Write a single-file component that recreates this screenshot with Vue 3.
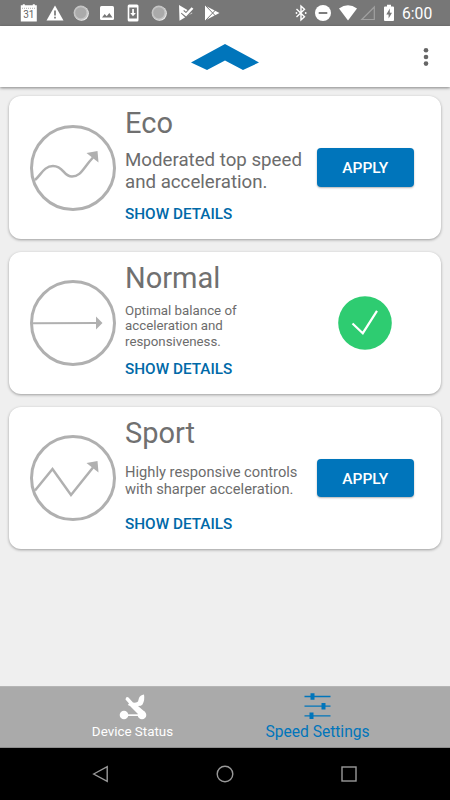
<script setup>
import { ref } from 'vue';

const active = ref('normal');
const tab = ref('speed');

const modes = [
  {
    id: 'eco',
    title: 'Eco',
    lines: ['Moderated top speed', 'and acceleration.'],
    path: 'M5 55 C11 50 14 41 23 41 C34 41 33 51.5 42 51.5 C51 51.5 53 43 63 32.5',
    head: 'M56.5 28 L67.5 26 L68.5 37.5 Z'
  },
  {
    id: 'normal',
    title: 'Normal',
    lines: ['Optimal balance of', 'acceleration and', 'responsiveness.'],
    path: 'M3 43.3 L67 43',
    head: 'M66 36.5 L72.5 43 L66 49.5 Z'
  },
  {
    id: 'sport',
    title: 'Sport',
    lines: ['Highly responsive controls', 'with sharper acceleration.'],
    path: 'M5 55.5 L22.5 34 L41 60 L63 32.5',
    head: 'M56.5 28 L67.5 26 L68.5 37.5 Z'
  }
];
</script>

<template>
  <div class="screen">
    <div class="status">
      <div class="notices">
        <svg viewBox="0 0 18 18">
          <path fill="#fff" d="M.8 1.3h2v-1h2v1h8v-1h2v1h2v16.200h-16z" />
          <path stroke="#999" stroke-width=".8" d="M2 4.3h14" stroke-dasharray="1 1" />
          <text x="8.800" y="14" text-anchor="middle" font-size="10" fill="#666">31</text>
        </svg>
        <svg viewBox="0 0 18 18">
          <path fill="#fff" d="M9 1.500 L17.500 16.500 H.5z" />
          <path stroke="#777" stroke-width="1.700" d="M9 6.500v5M9 12.800v1.700" />
        </svg>
        <svg viewBox="0 0 18 18">
          <circle cx="9.500" cy="9.500" r="7.300" fill="#eee" />
          <circle cx="8.800" cy="8.800" r="7.200" fill="#c4c4c4" />
          <circle cx="8.800" cy="8.800" r="5.600" fill="#aaa" />
        </svg>
        <svg viewBox="0 0 18 18">
          <rect x="2" y="2" width="14" height="14" rx="1.500" fill="#fff" />
          <path fill="#777" d="M4 13.500l2.700-3.500 2 2.300 2.600-3.300 3.200 4.500z" />
        </svg>
        <svg viewBox="0 0 18 18">
          <rect x="3.700" y="0.500" width="10.800" height="17" rx="1.500" fill="#fff" />
          <path fill="#777" d="M5.300 3.500h7.600v11h-7.600z" />
          <path fill="#fff" d="M8.200 5h1.700v4h2l-2.900 3.300L6.200 9h2z" />
        </svg>
        <svg viewBox="0 0 18 18">
          <circle cx="9.500" cy="9.500" r="7.300" fill="#eee" />
          <circle cx="8.800" cy="8.800" r="7.200" fill="#c4c4c4" />
          <circle cx="8.800" cy="8.800" r="5.600" fill="#aaa" />
        </svg>
        <svg viewBox="0 0 18 18">
          <path fill="#fff" d="M2 1 L15.500 9 L2.500 16.800z" />
          <path fill="none" stroke="#777" stroke-width="4.600" d="M5.500 7.800 L9 11 L17 3" />
          <path fill="none" stroke="#fff" stroke-width="2.500" d="M5 7.500 L9 10.800 L15.500 4" />
        </svg>
        <svg viewBox="0 0 18 18">
          <path fill="#fff" d="M2 1.500 L16.500 9 L2 16.500z" />
          <path fill="none" stroke="#777" stroke-width="1" d="M2.500 1.500 L12.500 12M2.500 16.500 L12.500 6" />
        </svg>
      </div>
      <div class="system">
        <svg class="bt" viewBox="0 0 12 18">
          <path fill="none" stroke="#fff" stroke-width="1.400" d="M1.500 5 L9.500 12.700 L6 16 V2 L9.500 5.300 L1.500 13" />
          <circle cx="1.500" cy="9" r=".9" fill="#fff" /><circle cx="10.700" cy="9" r=".9" fill="#fff" />
        </svg>
        <svg class="dnd" viewBox="0 0 18 18">
          <circle cx="9" cy="9" r="8" fill="#fff" />
          <path stroke="#777" stroke-width="1.900" d="M4.700 9h8.600" />
        </svg>
        <svg class="wifi" viewBox="0 0 18 18">
          <path fill="#fff" d="M0 4.500 Q9-2 18 4.500 L9 16.500z" />
        </svg>
        <svg class="signal" viewBox="0 0 16 18">
          <path fill="none" stroke="#a0a0a0" stroke-width="1.200" d="M14.300 3V15.500H1.800z" />
        </svg>
        <svg class="battery" viewBox="0 0 10 18">
          <path fill="#fff" d="M3 .8h4v1.700h2q1 0 1 1v12.500q0 1-1 1h-8q-1 0-1-1v-12.500q0-1 1-1h2z" />
          <path fill="#777" d="M5.800 4.500 L2.300 10.500H4.600V14.500 L8 8.700H5.800z" />
        </svg>
        <span class="time">6:00</span>
      </div>
    </div>

    <header class="header">
      <svg class="logo" viewBox="0 0 68 26">
        <path fill="#0075bb" d="M34 0 L68 18.500 L52 26 L34 16.500 L16 26 L0 18.500z" />
      </svg>
      <svg class="more" viewBox="0 0 6 20">
        <circle cx="3" cy="3.300" r="2.300" /><circle cx="3" cy="10" r="2.300" /><circle cx="3" cy="16.600" r="2.300" />
      </svg>
    </header>

    <main class="list">
      <section v-for="mode in modes" :key="mode.id" class="card" :class="mode.id">
        <svg class="graph" viewBox="0 0 86 86">
          <circle cx="43" cy="43" r="41.500" stroke-width="3" />
          <path :d="mode.path" :stroke-width="mode.id === 'normal' ? 2 : 2.5" />
          <path class="head" :d="mode.head" />
        </svg>
        <div class="info">
          <h2>{{ mode.title }}</h2>
          <div class="desc">
            <span v-for="line in mode.lines" :key="line">{{ line }}</span>
          </div>
          <a class="details">SHOW DETAILS</a>
        </div>
        <div class="action">
          <svg v-if="active === mode.id" class="check" viewBox="0 0 54 54">
            <circle cx="27" cy="27" r="26.800" fill="#2ecc71" />
            <path fill="none" stroke="#fff" stroke-width="2.200" d="M14.500 27.500 L24.800 37.200 L39 14.800" />
          </svg>
          <button v-else type="button" @click="active = mode.id">APPLY</button>
        </div>
      </section>
    </main>

    <nav class="tabs">
      <div class="tab device" :class="{ selected: tab === 'device' }" @click="tab = 'device'">
        <svg viewBox="0 0 28 28">
          <g fill="#fff">
            <circle cx="5" cy="23" r="4.300" /><circle cx="23" cy="23" r="4.300" />
            <path d="M8 22.300h12v1.700H8z" />
            <path d="M6.500 7.500 Q7 4 9.500 5.500 L14 10.500 Q18 11 19 9.500 L20 6 Q21 3 25 2.500 Q26 8 23.500 12.500 Q22.500 14 19 14 L26 20 L20 23 L11 14 L8.800 13 L10 11.500z" />
          </g>
        </svg>
        <span>Device Status</span>
      </div>
      <div class="tab speed" :class="{ selected: tab === 'speed' }" @click="tab = 'speed'">
        <svg viewBox="0 0 28 28">
          <path stroke="#0075bb" stroke-width="1.300" d="M.5 4.500h26M.5 14.200h26M.5 23.900h26" />
          <path fill="#0075bb" d="M6.500 1.300h4v6.500h-4zM17.500 11h4v6.500h-4zM5.500 20.600h4v6.500h-4z" />
        </svg>
        <span>Speed Settings</span>
      </div>
    </nav>

    <div class="navbar">
      <svg viewBox="0 0 18 18"><path d="M1.700 9 L15.200 1.700 V16.300z" /></svg>
      <svg viewBox="0 0 18 18"><circle cx="9" cy="9" r="7.800" /></svg>
      <svg viewBox="0 0 18 18"><rect x="2" y="2" width="14" height="14" /></svg>
    </div>
  </div>
</template>

<style>
  body {
    background: #efefef;
  }
</style>

<style scoped>
  .screen {
    display: flex;
    flex-direction: column;
    width: 450px;
    height: 800px;
    overflow: hidden;
    background: #efefef;
    font-family: Roboto, "Liberation Sans", sans-serif;
  }
  svg {
    display: block;
    flex: none;
  }
  .status {
    display: flex;
    justify-content: space-between;
    align-items: center;
    box-sizing: border-box;
    height: 26px;
    padding: 0 17px 0 19.500px;
    background: #777;
  }
  .notices {
    display: flex;
    gap: 8.200px;
  }
  .notices svg {
    width: 18px;
    height: 18px;
  }
  .system {
    display: flex;
    align-items: center;
  }
  .system svg {
    height: 18px;
  }
  .bt {
    width: 12px;
    margin-right: 7px;
  }
  .dnd {
    width: 18px;
    margin-right: 7px;
  }
  .wifi {
    width: 18px;
    margin-right: 3px;
  }
  .signal {
    width: 16px;
    margin-right: 8px;
  }
  .battery {
    width: 10px;
    margin-right: 8px;
  }
  .time {
    width: 31px;
    padding-top: 2px;
    color: #fff;
    font-size: 15.700px;
    line-height: 18px;
    white-space: nowrap;
  }
  .header {
    display: flex;
    align-items: center;
    justify-content: space-between;
    box-sizing: border-box;
    height: 61px;
    padding: 0 21px 0 191px;
    background: #fff;
    box-shadow: 0 1px 3px rgba(0, 0, 0, 0.45);
  }
  .logo {
    width: 68px;
    height: 26px;
  }
  .more {
    width: 6px;
    height: 20px;
    fill: #666;
  }
  .list {
    flex: 1;
    display: flex;
    flex-direction: column;
    gap: 12.800px;
    padding: 9.300px 9px 0;
  }
  .card {
    display: flex;
    align-items: center;
    box-sizing: border-box;
    height: 142.500px;
    padding: 0 27.500px 0 21px;
    border-radius: 12px;
    background: #fff;
    box-shadow: 0 1px 3px rgba(0, 0, 0, 0.35);
  }
  .graph {
    width: 86px;
    height: 86px;
    fill: none;
    stroke: #b0b0b0;
  }
  .graph .head {
    fill: #b0b0b0;
    stroke: none;
  }
  .info {
    flex: 1;
    display: flex;
    flex-direction: column;
    height: 142.500px;
    box-sizing: border-box;
    padding: 6.500px 0 0 9px;
    white-space: nowrap;
  }
  h2 {
    margin: 0;
    height: 40px;
    line-height: 40px;
    font-size: 29px;
    font-weight: 400;
    color: #707070;
  }
  .desc {
    display: flex;
    flex-direction: column;
    justify-content: center;
    height: 56px;
    color: #6c6c6c;
  }
  .eco .desc {
    font-size: 18.700px;
    line-height: 22px;
  }
  .normal .desc {
    font-size: 13.300px;
    line-height: 15.700px;
  }
  .sport .desc {
    font-size: 14.700px;
    line-height: 17.300px;
  }
  .details {
    height: 30px;
    line-height: 30px;
    font-size: 15.300px;
    font-weight: 500;
    color: #0069a8;
  }
  .action {
    display: flex;
    justify-content: center;
    width: 96.500px;
  }
  button {
    width: 96.500px;
    height: 38.500px;
    padding: 1px 0 0;
    border: none;
    border-radius: 4px;
    background: #0075bb;
    color: #fff;
    font-family: inherit;
    font-size: 15.500px;
    font-weight: 500;
    box-shadow: 0 1px 2px rgba(0, 0, 0, 0.3);
  }
  .check {
    width: 54px;
    height: 54px;
  }
  .tabs {
    display: flex;
    box-sizing: border-box;
    height: 62px;
    padding: 0 40px;
    background: #aaa;
    border-top: 1px solid #b5b5b5;
    border-bottom: 1px solid #8c8c8c;
  }
  .tab {
    flex: 1;
    display: flex;
    flex-direction: column;
    align-items: center;
    gap: 1.500px;
    padding-top: 5px;
    color: #fff;
    font-size: 13.400px;
    line-height: 20px;
  }
  .tab svg {
    width: 28px;
    height: 28px;
  }
  .tab.selected {
    color: #0075bb;
    font-size: 15.600px;
  }
  .navbar {
    display: flex;
    justify-content: space-between;
    align-items: center;
    box-sizing: border-box;
    height: 52px;
    padding: 0 92px;
    background: #000;
  }
  .navbar svg {
    width: 18px;
    height: 18px;
    fill: none;
    stroke: #999;
    stroke-width: 1.400;
  }
</style>
